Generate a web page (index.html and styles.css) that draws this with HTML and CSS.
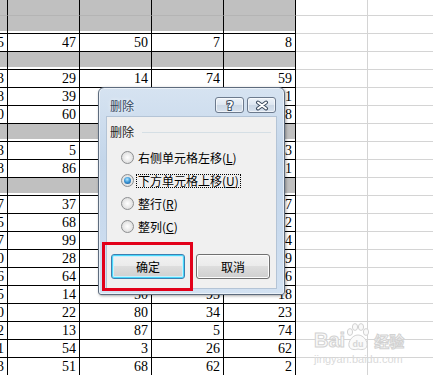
FILE: index.html
```html
<!DOCTYPE html>
<html lang="zh-CN">
<head>
  <meta charset="UTF-8">
  <title>删除</title>
  <link rel="stylesheet" href="styles.css">
</head>
<body>
  <div class="sheet" id="sheet"></div>

  <div class="dialog">
    <div class="titlebar">
      <span class="title">删除</span>
      <div class="caption-btns">
        <span class="cap-btn">
          <svg width="10" height="12" viewBox="0 0 10 12"><text x="5" y="11" text-anchor="middle" font-family="DejaVu Sans" font-weight="bold" font-size="12" fill="#fff" stroke="#3c4b5e" stroke-width="2" paint-order="stroke">?</text></svg>
        </span>
        <span class="cap-btn">
          <svg width="14" height="11" viewBox="0 0 14 11">
            <path d="M3 2.5 L11 8.5 M11 2.5 L3 8.5" stroke="#3c4b5e" stroke-width="4" stroke-linecap="round"/>
            <path d="M3 2.5 L11 8.5 M11 2.5 L3 8.5" stroke="#fff" stroke-width="2" stroke-linecap="round"/>
          </svg>
        </span>
      </div>
    </div>

    <div class="panel">
      <div class="group-head"><span>删除</span><i class="rule"></i></div>
      <ul class="options">
        <li><span class="radio"></span><span class="label">右侧单元格左移(<u>L</u>)</span></li>
        <li><span class="radio checked"></span><span class="label focus">下方单元格上移(<u>U</u>)</span></li>
        <li><span class="radio"></span><span class="label">整行(<u>R</u>)</span></li>
        <li><span class="radio"></span><span class="label">整列(<u>C</u>)</span></li>
      </ul>
      <div class="actions">
        <button class="btn default">确定</button>
        <button class="btn">取消</button>
      </div>
    </div>
  </div>

  <div class="mark"></div>

  <div class="watermark">
    <div class="wm-top">
      <span class="wm-bai">Bai</span>
      <span class="wm-paw">
        <svg width="24" height="28" viewBox="0 0 24 28">
          <ellipse cx="4" cy="9" rx="2.6" ry="3.4" fill="#fafafa" stroke="#d2d2d2"/>
          <ellipse cx="9" cy="4" rx="2.6" ry="3.4" fill="#fafafa" stroke="#d2d2d2"/>
          <ellipse cx="15" cy="4" rx="2.6" ry="3.4" fill="#fafafa" stroke="#d2d2d2"/>
          <ellipse cx="20" cy="9" rx="2.6" ry="3.4" fill="#fafafa" stroke="#d2d2d2"/>
          <path d="M12 12 C6 12 2 19 3 23 C4 27 9 27 12 26 C15 27 20 27 21 23 C22 19 18 12 12 12 Z" fill="#fafafa" stroke="#d2d2d2"/>
          <text x="12" y="24" text-anchor="middle" font-family="Liberation Sans" font-weight="bold" font-size="9" fill="#d6d6d6">du</text>
        </svg>
      </span>
      <span class="wm-jy">经验</span>
    </div>
    <div class="wm-url">jingyan.baidu.com</div>
  </div>

  <script>
    // rows of the sheet, 'g' is a grey filled row, '' is a cell hidden by the dialog
    const rows = [
      'g', 'g',
      ['25', '47', '50', '7', '8'],
      'g',
      ['63', '29', '14', '74', '59'],
      ['18', '39', '', '', '1'],
      ['70', '60', '', '', '8'],
      'g',
      ['53', '5', '', '', '3'],
      ['28', '86', '', '', '1'],
      'g',
      ['47', '37', '', '', '7'],
      ['15', '68', '', '', '2'],
      ['87', '99', '', '', '4'],
      ['30', '28', '', '', '9'],
      ['76', '64', '', '', '6'],
      ['45', '14', '50', '93', '18'],
      ['60', '22', '80', '34', '23'],
      ['92', '13', '87', '5', '74'],
      ['71', '54', '3', '26', '62'],
      ['33', '51', '68', '62', '2']
    ];

    const sheet = document.getElementById('sheet');
    let html = '';
    rows.forEach((row, i) => {
      for (let c = 0; c < 5; c++) {
        if (row === 'g') {
          html += `<div class="cell grey${i === 0 ? ' first' : ''}"></div>`;
        } else {
          html += `<div class="cell">${row[c]}</div>`;
        }
      }
      html += '<div class="cell blank"></div><div class="cell blank"></div>';
    });
    sheet.innerHTML = html;
  </script>
</body>
</html>
```

FILE: styles.css
```css
* {
  margin: 0;
  padding: 0;
  box-sizing: border-box;
}

body {
  width: 433px;
  height: 375px;
  overflow: hidden;
  background: #fff;
  position: relative;
  font-family: "Noto Sans CJK SC", "Liberation Sans", sans-serif;
}

/* Spreadsheet */
.sheet {
  display: grid;
  grid-template-columns: repeat(7, 72px);
  grid-auto-rows: 18px;
  margin: -2px 0 0 -64px;
  width: 504px;
}

.cell {
  border-right: 1px solid #000;
  border-bottom: 1px solid #000;
  text-align: right;
  padding-right: 3px;
  font-family: "Liberation Serif", serif;
  font-size: 14px;
  line-height: 18px;
  color: #000;
}

.cell.grey {
  background: #c0c0c0;
  box-shadow: inset 0 -2px 0 #fff;
}

.cell.grey.first {
  border-bottom-color: #b4b4b4;
  box-shadow: none;
}

.cell.blank {
  border-right-color: #d4d4d4;
  border-bottom-color: #d4d4d4;
  background: #fff;
  box-shadow: none;
}

/* Dialog */
.dialog {
  position: absolute;
  left: 98px;
  top: 87px;
  width: 187px;
  height: 208px;
  border: 1px solid #5d6b7d;
  border-radius: 6px 6px 3px 3px;
  background: linear-gradient(180deg, #d6e3f1 0%, #c4d6ea 35%, #cadbee 70%, #d3e2f2 100%);
  box-shadow: inset 0 0 0 1px rgba(255, 255, 255, 0.55), 1px 1px 3px rgba(0, 0, 0, 0.35);
}

.titlebar {
  height: 28px;
  display: flex;
  align-items: flex-start;
  padding: 0 8px 0 11px;
}

.title {
  font-size: 12px;
  line-height: 12px;
  margin-top: 12px;
  color: #34465c;
  text-shadow: 0 0 4px rgba(255, 255, 255, 0.9);
}

.caption-btns {
  margin-left: auto;
  margin-top: 9px;
  display: flex;
  gap: 3px;
}

.cap-btn {
  width: 29px;
  height: 16px;
  border: 1px solid #6c7a8d;
  border-radius: 3px;
  background: linear-gradient(180deg, #eef3f9 0%, #dde6f0 50%, #cbd7e5 51%, #d8e2ee 100%);
  box-shadow: inset 0 0 0 1px rgba(255, 255, 255, 0.6);
  display: flex;
  align-items: center;
  justify-content: center;
}

.panel {
  margin: 0 7px;
  height: 173px;
  background: #f0f0f0;
  border: 1px solid #b4c4d6;
}

.group-head {
  display: flex;
  align-items: center;
  padding: 7px 5px 0 3px;
  font-size: 12px;
  line-height: 16px;
  color: #1e1e1e;
}

.rule {
  flex: 1;
  margin-left: 8px;
  border-top: 1px solid #d5dfe5;
}

.options {
  list-style: none;
  margin-top: 6px;
  padding-left: 14px;
}

.options li {
  height: 23px;
  display: flex;
  align-items: center;
  font-size: 12px;
  color: #000;
}

.radio {
  width: 13px;
  height: 13px;
  border-radius: 50%;
  border: 1px solid #8c8e90;
  background: radial-gradient(circle at 50% 50%, #ffffff 0%, #eeeeee 40%, #d2d2d2 100%);
  display: flex;
  align-items: center;
  justify-content: center;
  margin-right: 4px;
}

.radio.checked::after {
  content: '';
  width: 7px;
  height: 7px;
  border-radius: 50%;
  background: radial-gradient(circle at 45% 35%, #b5e8ff 0%, #3f9ad8 45%, #0d4a8c 100%);
}

.label {
  line-height: 12px;
  border: 1px dotted transparent;
  padding: 0 1px;
  margin-left: -2px;
}

.label.focus {
  border-color: #000;
}

.label u {
  text-underline-offset: 1px;
}

.actions {
  display: flex;
  gap: 11px;
  margin-top: 16px;
  padding-left: 4px;
}

.btn {
  width: 74px;
  height: 25px;
  border: 1px solid #707070;
  border-radius: 3px;
  background: linear-gradient(180deg, #f2f2f2 0%, #ebebeb 48%, #dddddd 50%, #cfcfcf 100%);
  box-shadow: inset 0 0 0 1px #fcfcfc;
  font-family: "Noto Sans CJK SC", sans-serif;
  font-size: 12px;
  color: #000;
}

.btn.default {
  border-color: #3c7fb1;
  box-shadow: inset 0 0 0 1px #48d8fb, inset 0 0 0 2px #c9f0fd;
}

/* red highlight box */
.mark {
  position: absolute;
  left: 102px;
  top: 242px;
  width: 91px;
  height: 49px;
  border: 3px solid #e2001a;
}

/* watermark */
.watermark {
  position: absolute;
  left: 314px;
  top: 320px;
  width: 92px;
}

.wm-top {
  display: flex;
  align-items: flex-end;
  height: 31px;
}

.wm-bai {
  font-family: "Liberation Sans", sans-serif;
  font-weight: bold;
  font-size: 20px;
  line-height: 20px;
  color: #fafafa;
  -webkit-text-stroke: 1px #d2d2d2;
  margin-bottom: 1px;
}

.wm-paw {
  display: flex;
  margin: 0 4px 0 1px;
}

.wm-jy {
  font-size: 15px;
  line-height: 18px;
  font-weight: bold;
  color: #fafafa;
  -webkit-text-stroke: 1px #d2d2d2;
  margin-bottom: 1px;
}

.wm-url {
  font-family: "Liberation Sans", sans-serif;
  font-size: 11px;
  line-height: 12px;
  margin-top: 2px;
  color: #dadada;
}
```
